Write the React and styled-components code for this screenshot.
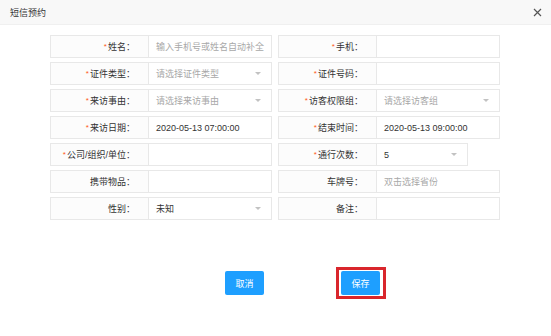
import styled, { createGlobalStyle } from "styled-components";

const Global = createGlobalStyle`
  html, body {
    margin: 0;
    padding: 0;
    background: #ffffff;
  }
  body {
    font-family: "Liberation Sans", "Noto Sans CJK SC", sans-serif;
    color: #333333;
  }
`;

const Dialog = styled.div`
  width: 551px;
  height: 336px;
  background: #ffffff;
  overflow: hidden;
`;

const Header = styled.div`
  height: 24px;
  display: flex;
  align-items: center;
  justify-content: space-between;
  padding: 0 9px 0 10px;
  background: #f8f8f8;
  border-bottom: 1px solid #f0f0f0;
  font-size: 9px;
  color: #333333;
`;

const Close = styled.span`
  width: 9px;
  height: 9px;
  display: flex;
  align-items: center;
  justify-content: center;
  margin-top: 1px;
`;

const Form = styled.div`
  display: grid;
  grid-template-columns: 222px 222px;
  column-gap: 6px;
  row-gap: 4px;
  padding: 10px 0 0 50px;
`;

const Field = styled.div`
  display: flex;
  height: 23px;
  width: ${(p) => p.$width || 222}px;
  box-sizing: border-box;
  border: 1px solid #e8e8e8;
  font-size: 9px;
`;

const Label = styled.div`
  width: 98px;
  flex: none;
  display: flex;
  align-items: center;
  justify-content: flex-end;
  padding-right: 13px;
  box-sizing: border-box;
  background: #fcfcfc;
  border-right: 1px solid #e8e8e8;
  color: #333333;
  white-space: nowrap;
`;

const Star = styled.span`
  color: #ff5722;
  font-size: 8px;
  margin-right: 1px;
  align-self: flex-start;
  margin-top: 6px;
`;

const Input = styled.div`
  flex: 1;
  display: flex;
  align-items: center;
  justify-content: space-between;
  padding: 0 7px;
  color: ${(p) => (p.$placeholder ? "#a8a8a8" : "#333333")};
  background: #ffffff;
  white-space: nowrap;
  overflow: hidden;
`;

const Caret = styled.span`
  width: 0;
  height: 0;
  border-left: 3px solid transparent;
  border-right: 3px solid transparent;
  border-top: 3px solid #c2c2c2;
  margin-right: 3px;
`;

const Buttons = styled.div`
  display: flex;
  align-items: center;
  padding: 47px 0 0 225px;
`;

const Button = styled.button`
  width: 39px;
  height: 24px;
  border: none;
  border-radius: 2px;
  background: #1e9fff;
  color: #ffffff;
  font-family: inherit;
  font-size: 9px;
  padding: 0;
  cursor: pointer;
`;

const Highlight = styled.div`
  margin-left: 72px;
  padding: 0 3px 0 2px;
  height: 26px;
  display: flex;
  align-items: center;
  border: 3px solid #d9262c;
`;

const fields = [
  { label: "姓名", req: true, value: "输入手机号或姓名自动补全", ph: true },
  { label: "手机", req: true, value: "" },
  { label: "证件类型", req: true, value: "请选择证件类型", ph: true, select: true },
  { label: "证件号码", req: true, value: "" },
  { label: "来访事由", req: true, value: "请选择来访事由", ph: true, select: true },
  { label: "访客权限组", req: true, value: "请选择访客组", ph: true, select: true },
  { label: "来访日期", req: true, value: "2020-05-13 07:00:00" },
  { label: "结束时间", req: true, value: "2020-05-13 09:00:00" },
  { label: "公司/组织/单位", req: true, value: "" },
  { label: "通行次数", req: true, value: "5", select: true, width: 190 },
  { label: "携带物品", value: "" },
  { label: "车牌号", value: "双击选择省份", ph: true },
  { label: "性别", value: "未知", select: true },
  { label: "备注", value: "" },
];

export default function App() {
  return (
    <Dialog>
      <Global />
      <Header>
        <span>短信预约</span>
        <Close>
          <svg width="9" height="9" viewBox="0 0 9 9">
            <path d="M1 1 L8 8 M8 1 L1 8" stroke="#555" strokeWidth="1.2" />
          </svg>
        </Close>
      </Header>
      <Form>
        {fields.map((f) => (
          <Field key={f.label} $width={f.width}>
            <Label>
              {f.req && <Star>*</Star>}
              {f.label}：
            </Label>
            <Input $placeholder={f.ph}>
              <span>{f.value}</span>
              {f.select && <Caret />}
            </Input>
          </Field>
        ))}
      </Form>
      <Buttons>
        <Button>取消</Button>
        <Highlight>
          <Button>保存</Button>
        </Highlight>
      </Buttons>
    </Dialog>
  );
}
